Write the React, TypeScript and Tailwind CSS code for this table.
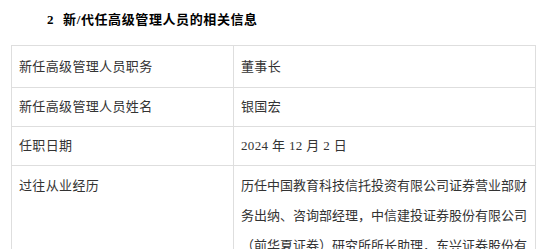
const rows = [
  { label: "新任高级管理人员职务", value: "董事长", h: "h-[42px]" },
  { label: "新任高级管理人员姓名", value: "银国宏", h: "h-[39px]" },
  { label: "任职日期", value: "2024 年 12 月 2 日", h: "h-[39px]" },
];

const history = [
  "历任中国教育科技信托投资有限公司证券营业部财",
  "务出纳、咨询部经理，中信建投证券股份有限公司",
  "（前华夏证券）研究所所长助理，东兴证券股份有",
];

const App = () => {
  return (
    <div
      className="w-[550px] h-[249px] overflow-hidden bg-white text-[#333] pl-[11px] pr-[14px]"
      style={{ fontFamily: '"Liberation Serif", "Noto Sans CJK SC", serif' }}
    >
      <h2 className="flex h-[45px] pt-[9px] pl-[36px] text-[13px] leading-[22px] font-bold text-black tracking-[0.6px]">
        <span className="mr-[9px]">2</span>
        <span>新/代任高级管理人员的相关信息</span>
      </h2>
      <table className="w-[525px] table-fixed border-collapse text-[13px] tracking-[0.35px]">
        <tbody>
          {rows.map((r) => (
            <tr key={r.label} className={r.h}>
              <td className="w-[222px] border border-[#dedede] px-[7px] align-middle">
                {r.label}
              </td>
              <td className="border border-[#dedede] px-[7px] align-middle">
                {r.value}
              </td>
            </tr>
          ))}
          <tr>
            <td className="w-[222px] border border-[#dedede] px-[7px] pt-[5px] align-top leading-[30px]">
              过往从业经历
            </td>
            <td className="border border-[#dedede] pl-[7px] pr-0 pt-[5px] align-top leading-[30px] tracking-normal">
              {history.map((line) => (
                <span key={line} className="block whitespace-nowrap">
                  {line}
                </span>
              ))}
            </td>
          </tr>
        </tbody>
      </table>
    </div>
  );
};

export default App;
